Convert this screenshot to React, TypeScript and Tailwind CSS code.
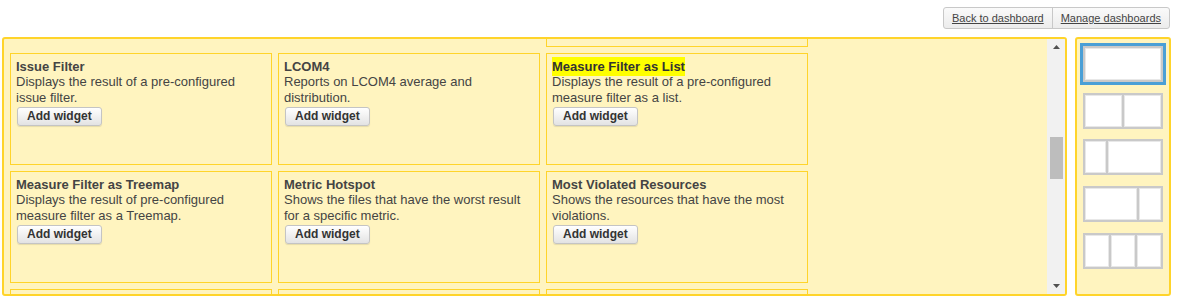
type Widget = { title: string; desc: string; highlight?: boolean; short?: boolean };

const rows: Widget[][] = [
  [
    { title: 'Events', desc: 'Shows events for the project.', short: true },
    { title: 'Hotspot by Metric', desc: 'Shows the files with the worst result.', short: true },
    {
      title: 'Issues and Technical Debt',
      desc: 'Reports on issues and technical debt of the project, with the count of issues by severity and the variation over time.',
    },
  ],
  [
    { title: 'Issue Filter', desc: 'Displays the result of a pre-configured issue filter.' },
    { title: 'LCOM4', desc: 'Reports on LCOM4 average and distribution.' },
    {
      title: 'Measure Filter as List',
      desc: 'Displays the result of a pre-configured measure filter as a list.',
      highlight: true,
    },
  ],
  [
    { title: 'Measure Filter as Treemap', desc: 'Displays the result of pre-configured measure filter as a Treemap.' },
    { title: 'Metric Hotspot', desc: 'Shows the files that have the worst result for a specific metric.' },
    { title: 'Most Violated Resources', desc: 'Shows the resources that have the most violations.' },
  ],
  [
    { title: 'Package Design', desc: 'Shows the package dependencies.' },
    { title: 'Rules Compliance', desc: 'Reports on rules compliance.' },
    { title: 'Size Metrics', desc: 'Reports general metrics on the size of the project.' },
  ],
];

// layout choices on the right; each entry lists the cell widths
const layouts: string[][] = [
  ['flex-1'],
  ['flex-1', 'flex-1'],
  ['w-[21px]', 'flex-1'],
  ['flex-1', 'w-[22px]'],
  ['flex-1', 'flex-1', 'flex-1'],
];

function AddButton() {
  return (
    <button className="ml-px mt-px block h-[19px] rounded-[3px] border border-[#c4c4c4] bg-linear-to-b from-white to-[#e3e3e3] px-[9px] text-[12px] font-bold leading-[17px] text-[#333] shadow-[0_1px_1px_rgba(0,0,0,0.1)]">
      Add widget
    </button>
  );
}

function WidgetCard({ w }: { w: Widget }) {
  return (
    <div
      className={`${w.short ? 'h-[90px]' : 'h-[112px]'} w-[262px] shrink-0 border border-[#ffd42a] pl-[5px] pt-[5px] text-[13px] text-[#444]`}
    >
      <div className="font-bold leading-[15px]">
        <span className={w.highlight ? 'bg-[#ffff00] py-[2px] text-[#333]' : ''}>{w.title}</span>
      </div>
      <div className="w-[245px] leading-[16px]">{w.desc}</div>
      <AddButton />
    </div>
  );
}

function Arrow({ up }: { up?: boolean }) {
  return (
    <svg width="7" height="4" viewBox="0 0 7 4">
      <polygon points={up ? '3.5,0 7,4 0,4' : '0,0 7,0 3.5,4'} fill="#505050" />
    </svg>
  );
}

export default function App() {
  return (
    <div className="h-[302px] w-[1178px] bg-white font-['Liberation_Sans',Arial,sans-serif]">
      {/* top links */}
      <div className="flex justify-end pr-[8px] pt-[7px]">
        <div className="flex h-[22px] rounded-[3px] border border-[#c8c8c8] bg-linear-to-b from-[#fafafa] to-[#ececec] text-[11px] leading-[20px] text-[#444]">
          <a className="px-[8px] underline">Back to dashboard</a>
          <a className="border-l border-[#c8c8c8] px-[8px] underline">Manage dashboards</a>
        </div>
      </div>

      <div className="mt-[8px] flex pl-[2px]">
        {/* widget list */}
        <div className="flex h-[259px] w-[1065px] overflow-hidden rounded-[3px] border-2 border-[#ffd42a] bg-[#fff4bf]">
          <div className="flex-1 overflow-hidden">
            <div className="-mt-[104px] flex flex-col gap-[6px] pl-[6px]">
              {rows.map((row, i) => (
                <div key={i} className="flex items-start gap-[6px]">
                  {row.map((w) => (
                    <WidgetCard key={w.title} w={w} />
                  ))}
                </div>
              ))}
            </div>
          </div>
          <div className="flex w-[18px] flex-col bg-[#f1f1f1]">
            <div className="flex h-[15px] items-center justify-center">
              <Arrow up />
            </div>
            <div className="mx-auto mt-[83px] h-[42px] w-[13px] bg-[#bdbdbd]" />
            <div className="flex-1" />
            <div className="flex h-[17px] items-center justify-center">
              <Arrow />
            </div>
          </div>
        </div>

        {/* layouts */}
        <div className="ml-[8px] flex h-[259px] w-[96px] flex-col gap-[4.7px] rounded-[3px] border-2 border-[#ffd42a] bg-[#fff4bf] px-[3px] pt-[4px]">
          {layouts.map((cells, i) => (
            <div key={i} className={`border-[3px] ${i === 0 ? 'border-[#4a9fd6]' : 'border-transparent'}`}>
              <div className="flex h-[36px] gap-[2px] border-2 border-[#c9c9c9] bg-[#c9c9c9]">
                {cells.map((c, j) => (
                  <div key={j} className={`${c} border border-[#e8e8e8] bg-white`} />
                ))}
              </div>
            </div>
          ))}
        </div>
      </div>
    </div>
  );
}
